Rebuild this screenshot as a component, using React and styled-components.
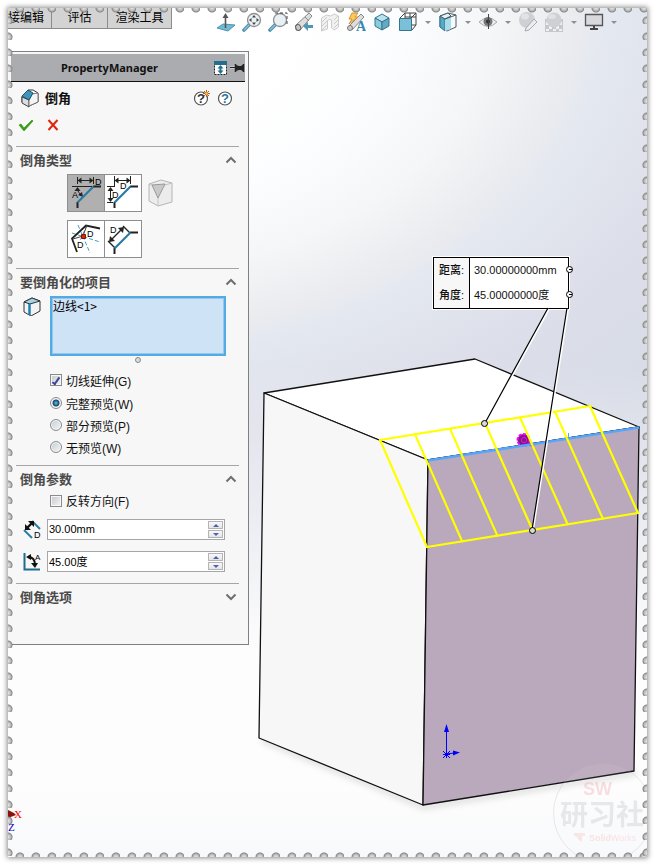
import { useState } from "react";
import styled, { createGlobalStyle, css } from "styled-components";

const chamferTypes = [
  [
    { id: "angle-distance", label: "角度距离", Icon: AngleDistanceIcon },
    { id: "distance-distance", label: "距离距离", Icon: DistanceDistanceIcon },
  ],
  [
    { id: "offset-face", label: "等距面", Icon: OffsetFaceIcon },
    { id: "face-face", label: "面-面", Icon: FaceFaceIcon },
  ],
];

const previews = [
  { id: "full", label: "完整预览(W)" },
  { id: "partial", label: "部分预览(P)" },
  { id: "none", label: "无预览(W)" },
];

const headsUpTools = [
  { label: "正视于", Icon: NormalToIcon },
  { label: "整屏显示全图", Icon: ZoomFitIcon },
  { label: "局部放大", Icon: ZoomAreaIcon },
  { label: "上一视图", Icon: PreviousViewIcon },
  { label: "剖面视图", Icon: SectionIcon },
  { label: "动态注解视图", Icon: AnnotationIcon },
  { label: "视图定向", Icon: CubeIcon },
  { label: "显示样式", Icon: WireCubeIcon, menu: true },
  { label: "隐藏线", Icon: StyleIcon, menu: true },
  { label: "隐藏/显示项目", Icon: EyeIcon, menu: true },
  { label: "编辑外观", Icon: AppearanceIcon },
  { label: "应用布景", Icon: SceneIcon, menu: true },
  { label: "视图设定", Icon: MonitorIcon, menu: true },
];

function App() {
  return (
    <>
      <GlobalStyle />
      <Sheet>
        <Header>
          <Tabs>
            <Tab>接编辑</Tab>
            <Tab $width={56}>评估</Tab>
            <Tab $width={64}>渲染工具</Tab>
          </Tabs>
          <HeadsUpBar>
            {headsUpTools.map(({ label, Icon, menu }) => (
              <ToolGroup key={label}>
                <ToolButton aria-label={label}>
                  <Icon />
                </ToolButton>
                {menu && (
                  <CaretButton aria-label={`${label} 菜单`}>
                    <svg width="6" height="4" viewBox="0 0 6 4">
                      <path d="M0 0h6L3 3z" fill="#8d8f94" />
                    </svg>
                  </CaretButton>
                )}
              </ToolGroup>
            ))}
          </HeadsUpBar>
        </Header>
        <Body>
          <Side>
            <PropertyManager />
            <Triad />
          </Side>
          <Viewport>
            <Callout>
              <tbody>
                <tr>
                  <th scope="row">距离:</th>
                  <td>30.00000000mm</td>
                </tr>
                <tr>
                  <th scope="row">角度:</th>
                  <td>45.00000000度</td>
                </tr>
              </tbody>
            </Callout>
            <Model />
          </Viewport>
        </Body>
        <Perforation $side="top" />
        <Perforation $side="bottom" />
        <Perforation $side="left" />
        <Perforation $side="right" />
      </Sheet>
    </>
  );
}

export default App;

function PropertyManager() {
  const [type, setType] = useState("angle-distance");
  const [tangent, setTangent] = useState(true);
  const [preview, setPreview] = useState("full");
  const [reverse, setReverse] = useState(false);
  const [distance, setDistance] = useState("30.00mm");
  const [angle, setAngle] = useState("45.00度");

  return (
    <Panel>
      <TitleBar>
        <Title>PropertyManager</Title>
        <TitleIcons />
      </TitleBar>
      <FeatureHeader>
        <FeatureRow>
          <ChamferIcon />
          <FeatureName>倒角</FeatureName>
          <IconButton aria-label="新增功能">
            <WhatsNewIcon />
          </IconButton>
          <IconButton aria-label="帮助">
            <HelpIcon />
          </IconButton>
        </FeatureRow>
        <ConfirmRow>
          <IconButton aria-label="确定">
            <svg width="16" height="14" viewBox="0 0 16 14">
              <path d="M1 7l2-1 3 4L14 2l1 1L6 13z" fill="#34a010" stroke="#2b8d0c" strokeWidth="0.6" />
            </svg>
          </IconButton>
          <IconButton aria-label="取消">
            <svg width="12" height="12" viewBox="0 0 12 12">
              <path d="M1.5 1l9 10M10.5 1l-9 10" stroke="#e0240a" strokeWidth="2" />
            </svg>
          </IconButton>
        </ConfirmRow>
      </FeatureHeader>

      <Section title="倒角类型" height={122}>
        <TypeGrid>
          {chamferTypes.map((row, i) => (
            <TypeRow key={i}>
              {row.map(({ id, label, Icon }) => (
                <TypeButton
                  key={id}
                  aria-label={label}
                  aria-pressed={type === id}
                  $active={type === id}
                  onClick={() => setType(id)}
                >
                  <Icon />
                </TypeButton>
              ))}
              {i === 0 && (
                <DisabledType aria-label="顶点" disabled>
                  <VertexIcon />
                </DisabledType>
              )}
            </TypeRow>
          ))}
        </TypeGrid>
      </Section>

      <Section title="要倒角化的项目" height={197}>
        <SelectionRow>
          <EdgeIcon />
          <SelectionBox aria-label="边线、面和环" defaultValue="边线<1>" />
        </SelectionRow>
        <Grip />
        <Options>
          <Option $height={24}>
            <Checkbox checked={tangent} onChange={() => setTangent(!tangent)} />
            切线延伸(G)
          </Option>
          {previews.map((p) => (
            <Option key={p.id} $height={22}>
              <Radio
                name="preview"
                checked={preview === p.id}
                onChange={() => setPreview(p.id)}
              />
              {p.label}
            </Option>
          ))}
        </Options>
      </Section>

      <Section title="倒角参数" height={118}>
        <Params>
          <Option $height={15} $indent>
            <Checkbox checked={reverse} onChange={() => setReverse(!reverse)} />
            反转方向(F)
          </Option>
          <Spinner label="距离" value={distance} onChange={setDistance} icon={<DistanceIcon />} />
          <Spinner label="角度" value={angle} onChange={setAngle} icon={<AngleIcon />} />
        </Params>
      </Section>

      <Section title="倒角选项" height={61} collapsed />
    </Panel>
  );
}

function Section({ title, height, collapsed, children }) {
  return (
    <SectionBox $height={height}>
      <SectionHead aria-expanded={!collapsed}>
        {title}
        <svg width="12" height="8" viewBox="0 0 12 8">
          <path
            d={collapsed ? "M1.5 1.5L6 6l4.5-4.5" : "M1.5 6.5L6 2l4.5 4.5"}
            fill="none"
            stroke="#6f6f6f"
            strokeWidth="2"
          />
        </svg>
      </SectionHead>
      {children}
    </SectionBox>
  );
}

function Spinner({ label, value, onChange, icon }) {
  const step = (delta) => {
    const unit = value.replace(/^[-\d.]+/, "");
    onChange((parseFloat(value) + delta).toFixed(2) + unit);
  };
  return (
    <SpinnerRow>
      {icon}
      <SpinnerField>
        <input aria-label={label} value={value} onChange={(e) => onChange(e.target.value)} />
        <SpinnerButtons>
          <button aria-label={`${label} 增加`} onClick={() => step(1)}>
            <svg width="6" height="3" viewBox="0 0 6 3">
              <path d="M0 3h6L3 0z" fill="#4c62ad" />
            </svg>
          </button>
          <button aria-label={`${label} 减少`} onClick={() => step(-1)}>
            <svg width="6" height="3" viewBox="0 0 6 3">
              <path d="M0 0h6L3 3z" fill="#4c62ad" />
            </svg>
          </button>
        </SpinnerButtons>
      </SpinnerField>
    </SpinnerRow>
  );
}

/* ---------- graphics area ---------- */

function Model() {
  const ribs = [0, 1, 2, 3, 4, 5, 6].map((i) => ({
    x1: 380 + i * 35,
    y1: 440 - (i * 34) / 6,
    x2: 427 + (i * 211) / 6,
    y2: 547 - (i * 34) / 6,
  }));
  return (
    <ModelSvg viewBox="249 51 398 806" width="398" height="806">
      <defs>
        <filter id="soft" x="-20%" y="-20%" width="140%" height="140%">
          <feGaussianBlur stdDeviation="3" />
        </filter>
      </defs>
      <path d="M262 740L424 807L636 773" fill="none" stroke="#888" strokeWidth="4" opacity="0.35" filter="url(#soft)" />
      <g stroke="#111" strokeWidth="1.3" strokeLinejoin="round">
        <path d="M264 393L475 359L639 427L428 460z" fill="#fff" />
        <path d="M264 393L428 460L423 805L259 738z" fill="#f7f7f7" />
        <path d="M428 460L639 427L634 771L423 805z" fill="#baa9bc" />
      </g>
      <circle cx="523.5" cy="440" r="6" fill="#7d1a85" stroke="#f0f" strokeWidth="2" strokeDasharray="3 1.5" />
      <circle cx="524" cy="440" r="2.6" fill="none" stroke="#f0f" />
      <path d="M527 443l7 3" stroke="#a010a8" strokeWidth="2.500" />
      <path d="M428 460.5L639 427.5" stroke="#55a5fb" strokeWidth="2.6" />
      <path d="M568.5 433v9" stroke="#55a5fb" />
      <g stroke="#ff0" strokeWidth="2.2" strokeLinecap="round">
        <path d="M380 440L590 406M427 547L638 513" />
        {ribs.map((r) => (
          <line key={r.x1} {...r} />
        ))}
      </g>
      <path d="M549 309L486 423M568 309L533 530" stroke="#fff" strokeWidth="2" />
      <path d="M548 308L485 423M567 308L532 530" stroke="#000" strokeWidth="1.2" />
      <g fill="#d8d8d8" stroke="#000">
        <circle cx="484.5" cy="423.5" r="3" />
        <circle cx="532.5" cy="530.5" r="3" />
      </g>
      <g stroke="#00f" fill="#00f">
        <path d="M446.5 754V730M446 754l8-1M443 751l7 7M450 751l-7 7M443 754.5h7M446.5 750v8" />
        <path d="M446.5 724l2.500 8h-5zM460 752.5l-7-2v5z" stroke="none" />
      </g>
      <g opacity="0.45">
        <circle cx="603" cy="813" r="49.5" fill="#fff" fillOpacity="0.15" stroke="#b9a9b4" strokeOpacity="0.6" />
        <Mark x="583" y="795" $size={18} fill="#f3b9bf">SW</Mark>
        <Mark x="560" y="825" $size={28} $serif fill="#cfd1d6">研习社</Mark>
        <path d="M574 833h11v3h-3v6l-3-2-3-4h-2z" fill="#f7cfcf" />
        <Mark x="589" y="841" $size={9} fill="#f7c6c6">
          Solid<tspan fontWeight="400">Works</tspan>
        </Mark>
      </g>
      <g fill="#fff" stroke="#000">
        <circle cx="569.5" cy="269.5" r="3" />
        <circle cx="569.5" cy="294.5" r="3" />
        <path d="M569 269.5h3M569 294.5h3" />
      </g>
    </ModelSvg>
  );
}

function Triad() {
  return (
    <TriadSvg width="20" height="28" viewBox="0 0 20 28">
      <path d="M0 2l6 3 2 2-8 3z" fill="#8c1111" />
      <text x="6" y="10" fill="#f00">X</text>
      <text x="0" y="23" fill="#00c">Z</text>
    </TriadSvg>
  );
}

/* ---------- toolbar icons ---------- */

function NormalToIcon() {
  return (
    <svg width="20" height="22" viewBox="0 0 20 22">
      <path d="M1 16l6-4 12 1-7 6z" fill="#74b9d2" stroke="#4b96b6" />
      <path d="M9.5 16V5" stroke="#555" strokeWidth="1.600" />
      <path d="M9.5 1l3 5h-6z" fill="#555" />
    </svg>
  );
}

function Lens({ children }) {
  return (
    <svg width="20" height="22" viewBox="0 0 20 22">
      <path d="M7 13l-5 5" stroke="#4d8eac" strokeWidth="3.600" strokeLinecap="round" />
      <path d="M7 13l-5 5" stroke="#8cc3da" strokeWidth="1.500" />
      <circle cx="12" cy="8" r="6.5" fill="#e9f0f3" stroke="#8b8f92" strokeWidth="1.300" />
      {children}
    </svg>
  );
}

function ZoomFitIcon() {
  return (
    <Lens>
      <path d="M12 3l2 2.500h-4zM12 13l2-2.500h-4zM7 8L9.500 6v4zM17 8L14.500 6v4z" fill="#444" />
    </Lens>
  );
}

function ZoomAreaIcon() {
  return (
    <Lens>
      <path d="M7 1h12v12" fill="none" stroke="#444" strokeDasharray="3 2" />
    </Lens>
  );
}

function PreviousViewIcon() {
  return (
    <svg width="20" height="22" viewBox="0 0 20 22">
      <path d="M2 13L15 1l3 3L6 18l-4 0z" fill="#ddd" stroke="#888" />
      <ellipse cx="4" cy="15.5" rx="2.5" ry="3" fill="#c8c8c8" stroke="#666" transform="rotate(-25 4 15)" />
      <path d="M11 5l4 4" stroke="#888" />
      <path d="M9 14l5-4v3h5v3h-5v3z" fill="#4f97b7" />
    </svg>
  );
}

function SectionIcon() {
  return (
    <svg width="20" height="22" viewBox="0 0 20 22">
      <path d="M1.5 6l5-3 4 1 4-2 4 2v11l-4 3-3-2V8q-3-2-4 1v8l-6 2z" fill="#f1f1f1" stroke="#ccc" />
      <path d="M2 10l5-5M2 14l6-6M2 18l5-5M14 8l4-4M14 12l4-4M14 16l4-4" stroke="#ccc" />
    </svg>
  );
}

function AnnotationIcon() {
  return (
    <svg width="20" height="22" viewBox="0 0 20 22">
      <path d="M2 15L15 2l3 3L6 18z" fill="#ddd" stroke="#888" />
      <circle cx="4" cy="16" r="2.5" fill="#ccc" stroke="#777" />
      <path d="M6 1h6L9 5h3l-9 7 3-5H3z" fill="#f9cb5e" stroke="#df8e27" />
      <IconLetter x="10" y="19" $size={14} $serif fill="#3c86ac">A</IconLetter>
    </svg>
  );
}

function CubeIcon() {
  return (
    <svg width="20" height="22" viewBox="0 0 20 22" stroke="#35748f" strokeLinejoin="round">
      <path d="M10 2l7 4-7 4-7-4z" fill="#b9e2ef" />
      <path d="M3 6l7 4v8l-7-4z" fill="#8ccade" />
      <path d="M17 6l-7 4v8l7-4z" fill="#64aac6" />
    </svg>
  );
}

function WireCubeIcon() {
  return (
    <svg width="20" height="22" viewBox="0 0 20 22">
      <path d="M2 6l5-5h11v12l-4 5M7 1v12h11M13 6l5-5M12 1v6M7 5h11" fill="none" stroke="#444" />
      <path d="M1.500 6.5h12v12h-12z" fill="#7cc0d8" stroke="#35748f" />
    </svg>
  );
}

function StyleIcon() {
  return (
    <svg width="20" height="22" viewBox="0 0 20 22" strokeLinejoin="round">
      <path d="M2 4l8-3 8 2v12l-9 4-7-4z" fill="#f6fafb" stroke="#4a5a63" />
      <path d="M2 4l5 3v12l-5-4z" fill="#58a9c8" stroke="#35748f" />
      <path d="M7 7l6-2v12l-6 2z" fill="#a8dcec" />
      <path d="M2 4l8-3 3 3-6 3z" fill="#dff2f7" stroke="#4a5a63" />
      <path d="M7 7l11-4" stroke="#4a5a63" />
    </svg>
  );
}

function EyeIcon() {
  return (
    <svg width="20" height="22" viewBox="0 0 20 22">
      <path d="M1 10q9-8 18 0q-9 9-18 0z" fill="#eee" stroke="#aaa" />
      <circle cx="10" cy="9.5" r="4.5" fill="#777" />
      <circle cx="10" cy="9.5" r="2" fill="#333" />
      <path d="M10.5 2v15" stroke="#444" />
    </svg>
  );
}

function AppearanceIcon() {
  return (
    <svg width="20" height="22" viewBox="0 0 20 22">
      <circle cx="9" cy="8" r="8" fill="#cfd0d3" />
      <ellipse cx="7" cy="4.5" rx="4" ry="3" fill="#e2e3e6" />
      <path d="M8 16l8-9 3 3-8 8-4 1z" fill="#ececee" stroke="#a9aaae" />
    </svg>
  );
}

function SceneIcon() {
  return (
    <svg width="20" height="22" viewBox="0 0 20 22">
      <path d="M1 7h18v13H1z" fill="#c6c7ca" />
      <path d="M2 10h3v3H2zM15 10h3v3h-3zM5 14h3v3H5zM12 14h3v3h-3zM2 17h3v2H2zM9 17h3v2H9zM15 17h3v2h-3z" fill="#f0f1f4" />
      <circle cx="10" cy="8" r="7.5" fill="#cfd0d3" />
      <ellipse cx="8" cy="4.5" rx="4" ry="2.5" fill="#e0e1e4" />
    </svg>
  );
}

function MonitorIcon() {
  return (
    <svg width="20" height="22" viewBox="0 0 20 22">
      <path d="M1.500 2.500h17v11h-17z" fill="#d9d9dd" stroke="#555" strokeWidth="1.300" />
      <path d="M9 14h2v2h3v2H6v-2h3z" fill="#444" />
    </svg>
  );
}

/* ---------- panel icons ---------- */

function TitleIcons() {
  return (
    <svg width="33" height="16" viewBox="0 0 33 16">
      <path d="M2.5 3.500h12v11h-12z" fill="#fff" stroke="#222" strokeDasharray="2 1" />
      <path d="M2 1h13v4H2z" fill="#246e8e" />
      <path d="M8.500 5l3 3.500H9.500v2h2l-3 3.500-3-3.500h2v-2h-2z" fill="#246e8e" />
      <path d="M18 7.500h6" stroke="#fff" strokeWidth="3" />
      <path d="M18 7.500h14M23.500 4v8M31.500 4v8" stroke="#222" strokeWidth="1.500" />
      <path d="M24 5l3 1h2l3-2v8l-3-2h-2l-3 1z" fill="#222" />
    </svg>
  );
}

function ChamferIcon() {
  return (
    <svg width="18" height="20" viewBox="0 0 18 20" strokeLinejoin="round">
      <path d="M1 8l6-6h5l5 3v9l-9 4-7-4z" fill="#fff" stroke="#333" />
      <path d="M1 9l7 3v7l-7-4z" fill="#ddd" stroke="#444" />
      <path d="M8 12l3-6 6-1v9l-9 4z" fill="#f4f4f4" stroke="#777" />
      <path d="M1 8l6-6 5 3-4 7z" fill="#3f94ba" stroke="#1c5470" />
    </svg>
  );
}

function HelpIcon({ dark, children }) {
  return (
    <svg width="18" height="16" viewBox="0 0 18 16">
      <circle cx="9" cy="8.5" r="6.500" fill="#fff" stroke="#555" strokeWidth="1.200" />
      <IconLetter x="5" y="13" $size={13} $bold fill={dark ? "#333" : "#1f78a6"}>?</IconLetter>
      {children}
    </svg>
  );
}

function WhatsNewIcon() {
  return (
    <HelpIcon dark>
      <path d="M14.500 0v7M11 3.500h7M12 1l5 5M17 1l-5 5" stroke="#b85f13" />
      <circle cx="14.500" cy="3.500" r="1.300" fill="#ffc95b" />
    </HelpIcon>
  );
}

/* the bevelled corner shared by the chamfer type buttons */
function Bevel() {
  return (
    <>
      <path d="M10.500 34v-6M26 12.500h8" stroke="#222" strokeWidth="2" />
      <path d="M10.500 28.500L26.500 12.500" stroke="#2a78a3" strokeWidth="2.200" />
    </>
  );
}

function AngleDistanceIcon() {
  return (
    <svg width="36" height="36" viewBox="1 1 36 36">
      <path d="M10.500 3v7M26.500 3v7M5 12.500h20M12 6.500h13" stroke="#222" />
      <path d="M10.500 6.500l4-3v6zM26.500 6.500l-4-3v6zM10.500 13l3 4h-6zM16 23l-5-2 4-3z" fill="#222" />
      <path d="M10.500 16q1 3 3 4" fill="none" stroke="#222" />
      <Bevel />
      <IconLetter x="28" y="11" $size={9}>D</IconLetter>
      <IconLetter x="5" y="24" $size={9}>A</IconLetter>
    </svg>
  );
}

function DistanceDistanceIcon() {
  return (
    <svg width="36" height="36" viewBox="1 1 36 36">
      <path d="M10.500 2v10M26.500 2v8M12 6.500h13M6.500 14v13M3 12.500h8M3 28.500h6" stroke="#222" />
      <path d="M10.500 6.500l4-3v6zM26.500 6.500l-4-3v6zM6.500 13l3 4h-6zM6.500 28l3-4h-6z" fill="#222" />
      <Bevel />
      <IconLetter x="16" y="15" $size={9}>D</IconLetter>
      <IconLetter x="8" y="24" $size={9}>D</IconLetter>
    </svg>
  );
}

function OffsetFaceIcon() {
  return (
    <svg width="36" height="36" viewBox="0 0 36 36">
      <path d="M10 4l12 28M4 12l28 9M19 4l-7 16" fill="none" stroke="#489cbf" strokeDasharray="4 2" />
      <path d="M9 31L4 17.500 18 4.500l14 3" fill="none" stroke="#222" strokeWidth="1.800" />
      <path d="M15 15l4-11M15 15L5 18" stroke="#444" />
      <path d="M13.500 13.500h4v4h-4z" fill="#e12008" stroke="#7d1408" />
      <IconLetter x="19" y="16" $size={9}>D</IconLetter>
      <IconLetter x="9" y="27" $size={9}>D</IconLetter>
    </svg>
  );
}

function FaceFaceIcon() {
  return (
    <svg width="36" height="36" viewBox="1 1 36 36">
      <path d="M6 21L19 8M4 21l7 7M19 6l7 7" stroke="#222" strokeWidth="1.400" />
      <path d="M5 22l1-6 5 5zM20 7l-6 1 5 5z" fill="#222" />
      <Bevel />
      <IconLetter x="6" y="13" $size={9}>D</IconLetter>
    </svg>
  );
}

function VertexIcon() {
  return (
    <svg width="26" height="30" viewBox="0 0 26 30" strokeLinejoin="round">
      <path d="M1 6l12-4 11 3v19l-14 4-9-5z" fill="#ececec" stroke="#b5b5b5" />
      <path d="M1 6l9 3 14-4M10 9v19" fill="none" stroke="#c4c4c4" />
      <path d="M4 7l13-1-7 14z" fill="#c9c9c9" stroke="#999" />
    </svg>
  );
}

function EdgeIcon() {
  return (
    <svg width="18" height="20" viewBox="0 0 18 20" strokeLinejoin="round">
      <path d="M1 6l8-4 8 3v10l-9 5-7-4z" fill="#f3f3f3" stroke="#333" />
      <path d="M1 6l8-4 8 3-10 3z" fill="#9ed3e8" stroke="#333" />
      <path d="M6.500 8v11" stroke="#1f7fae" strokeWidth="2.500" />
    </svg>
  );
}

function DistanceIcon() {
  return (
    <svg width="18" height="20" viewBox="0 0 18 20">
      <path d="M1 10l8 8M9 1l8 8" stroke="#2a7fa3" strokeWidth="2" />
      <path d="M4 8l5-5" stroke="#111" strokeWidth="2.400" />
      <path d="M2 10V4l6 6zM11 1v6L5 1z" fill="#111" />
      <IconLetter x="11" y="18" $size={9}>D</IconLetter>
    </svg>
  );
}

function AngleIcon() {
  return (
    <svg width="18" height="20" viewBox="0 0 18 20">
      <path d="M1.500 1v16.500H17" fill="none" stroke="#1f6c8f" strokeWidth="2" />
      <path d="M5 5q7 0 7 8" fill="none" stroke="#111" strokeWidth="2" />
      <path d="M3 5l5-3v6zM12 16l-4-5h7z" fill="#111" />
      <IconLetter x="12" y="8" $size={8}>A</IconLetter>
    </svg>
  );
}

/* ---------- styles ---------- */

const sans = `"Noto Sans CJK SC", sans-serif`;
const latin = `"Liberation Sans", "Noto Sans CJK SC", sans-serif`;

const GlobalStyle = createGlobalStyle`
  *, *::before, *::after {
    box-sizing: border-box;
  }
  body {
    margin: 0;
    background: #fff;
    font-family: ${latin};
    font-size: 12px;
    color: #111;
  }
  button {
    font: inherit;
    padding: 0;
    border: 0;
    background: none;
  }
  svg {
    display: block;
    flex: none;
  }
`;

const Sheet = styled.main`
  position: relative;
  display: flex;
  flex-direction: column;
  margin: 8px 7px 7px 8px;
  min-height: calc(100vh - 15px);
  overflow: hidden;
  box-shadow: 0 0 5px 1px rgba(0, 0, 0, 0.45);
  background:
    linear-gradient(
      to bottom,
      rgba(255, 255, 255, 0) 42%,
      #fdfdfe 76%,
      #fdfdfd 92%,
      #f8f9fb
    ),
    radial-gradient(
      ellipse 480px 330px at 90px 0,
      #fff 40%,
      #fcfdfe 62%,
      #f4f6f8 82%,
      #ebecef 98%,
      #e4e8f0 106%,
      #dcdfe9 132%,
      #d4d9e4 180%
    );
`;

const bite = (at) =>
  `radial-gradient(circle at ${at}, #dcdcdc 1px, #b4b4b4 3px, #858585 4px, transparent 5px)`;

const perforationSides = {
  top: css`
    inset: 0 0 auto 0;
    height: 5px;
    background: ${bite("12px 0")} 0 0 / 16px 5px;
  `,
  bottom: css`
    inset: auto 0 0 0;
    height: 5px;
    background: ${bite("12px 100%")} 0 0 / 16px 5px;
  `,
  left: css`
    inset: 0 auto 0 0;
    width: 5px;
    background: ${bite("0 13px")} 0 0 / 5px 16px;
  `,
  right: css`
    inset: 0 0 0 auto;
    width: 5px;
    background: ${bite("100% 13px")} 0 0 / 5px 16px;
  `,
};

const Perforation = styled.div`
  position: absolute;
  z-index: 2;
  pointer-events: none;
  ${(p) => perforationSides[p.$side]}
`;

const Header = styled.header`
  display: flex;
  height: 43px;
`;

const Tabs = styled.nav`
  display: flex;
  height: 21px;
`;

const Tab = styled.button`
  display: flex;
  justify-content: ${(p) => (p.$width ? "center" : "flex-end")};
  width: ${(p) => p.$width || 44}px;
  padding-right: ${(p) => (p.$width ? 0 : 7)}px;
  border-right: 1px solid #8c8c8c;
  border-bottom: 1px solid #8c8c8c;
  background: #d3d3d3;
  font-family: ${sans};
  font-size: 12px;
  line-height: 18px;
  white-space: nowrap;
`;

const HeadsUpBar = styled.div`
  display: flex;
  gap: 6px;
  height: 22px;
  margin: 4px 0 0 44px;
`;

const ToolGroup = styled.div`
  display: flex;
  align-items: center;
  gap: 6px;
`;

const ToolButton = styled.button`
  width: 20px;
  height: 22px;
`;

const CaretButton = styled.button`
  display: flex;
  justify-content: center;
  width: 8px;
`;

const Body = styled.div`
  display: flex;
  flex: 1;
`;

const Side = styled.div`
  display: flex;
  flex-direction: column;
  justify-content: space-between;
  width: 241px;
  flex: none;
`;

const Panel = styled.aside`
  border: 1px solid #808080;
  border-left: 0;
  background: #f7f7f7;
  padding: 2px 3px 0;
`;

const TitleBar = styled.div`
  display: flex;
  align-items: center;
  height: 28px;
  background: #abacb0;
  border-bottom: 1px solid #111;
`;

const Title = styled.h1`
  flex: 1;
  margin: 0;
  padding-left: 50px;
  font: bold 11px "Noto Sans", sans-serif;
`;

const FeatureHeader = styled.div`
  padding: 6px 11px 0 10px;
  height: 64px;
`;

const FeatureRow = styled.div`
  display: flex;
  align-items: center;
  gap: 6px;
  height: 20px;
`;

const FeatureName = styled.h2`
  flex: 1;
  margin: 0;
  font: bold 13px ${sans};
  line-height: 20px;
`;

const IconButton = styled.button`
  display: flex;
`;

const ConfirmRow = styled.div`
  display: flex;
  align-items: center;
  gap: 13px;
  height: 34px;
  margin-left: -3px;
`;

const SectionBox = styled.section`
  min-height: ${(p) => p.$height}px;
  margin: 0 6px 0 5px;
  border-top: 1px solid #a5a5a5;
`;

const SectionHead = styled.button`
  display: flex;
  align-items: center;
  justify-content: space-between;
  width: 100%;
  height: 25px;
  margin-bottom: 2px;
  padding: 0 2px 0 4px;
  font: bold 13px ${sans};
  line-height: 20px;
  color: #4a4a4a;
`;

const TypeGrid = styled.div`
  display: flex;
  flex-direction: column;
  gap: 8px;
  padding-left: 51px;
`;

const TypeRow = styled.div`
  display: flex;
  align-items: center;
`;

const TypeButton = styled.button`
  display: flex;
  align-items: center;
  justify-content: center;
  width: 38px;
  height: 38px;
  border: 1px solid #8e8e8e;
  background: ${(p) => (p.$active ? "#b0b0b0" : "#fff")};
  & + & {
    margin-left: -1px;
  }
`;

const DisabledType = styled.button`
  margin-left: 6px;
`;

const SelectionRow = styled.div`
  display: flex;
  gap: 9px;
  padding: 0 13px 0 7px;
`;

const SelectionBox = styled.textarea`
  flex: 1;
  min-width: 0;
  height: 60px;
  padding: 0 0 0 1px;
  border: 2px solid #52abe4;
  box-shadow: inset 0 0 0 1px #97c6ee;
  background: #cfe3f7;
  font: 12px ${sans};
  line-height: 16px;
  resize: none;
  outline: 0;
`;

const Grip = styled.div`
  width: 6px;
  height: 6px;
  margin: 1px auto 0 119px;
  border: 1px solid #888;
  border-radius: 50%;
  background: #ddd;
`;

const Options = styled.div`
  display: flex;
  flex-direction: column;
  padding: 5px 0 0 34px;
`;

const Option = styled.label`
  display: flex;
  align-items: center;
  gap: 4px;
  height: ${(p) => p.$height}px;
  margin-left: ${(p) => (p.$indent ? 34 : 0)}px;
`;

const Checkbox = styled.input.attrs({ type: "checkbox" })`
  appearance: none;
  display: grid;
  place-items: center;
  width: 12px;
  height: 12px;
  margin: 0;
  border: 1px solid #8b8b8b;
  box-shadow: inset 0 0 0 1px #f7f7f7;
  background: linear-gradient(135deg, #c4c7cc, #f6f6f6);
  &:checked::before {
    content: "";
    width: 4px;
    height: 9px;
    border: solid #39449c;
    border-width: 0 2px 2px 0;
    transform: rotate(35deg);
  }
`;

const Radio = styled.input.attrs({ type: "radio" })`
  appearance: none;
  width: 12px;
  height: 12px;
  margin: 0;
  border: 1px solid #8b8b8b;
  border-radius: 50%;
  box-shadow: inset 0 0 0 1px #f7f7f7;
  background: linear-gradient(135deg, #c2cdd4, #f6f6f6);
  &:checked {
    background: radial-gradient(circle at 5px 5px, #5cc2e8, #17466c 3px, #e8eef2 4px);
  }
`;

const Params = styled.div`
  display: flex;
  flex-direction: column;
  gap: 11px;
`;

const SpinnerRow = styled.div`
  display: flex;
  align-items: center;
  gap: 6px;
  padding: 0 14px 0 7px;
`;

const SpinnerField = styled.div`
  display: flex;
  flex: 1;
  height: 21px;
  border: 1px solid #a5a7ab;
  background: #fff;
  padding: 1px;
  input {
    flex: 1;
    min-width: 0;
    padding: 0 0 1px;
    border: 0;
    outline: 0;
    background: none;
    font: 11px ${latin};
  }
`;

const SpinnerButtons = styled.div`
  display: flex;
  flex-direction: column;
  gap: 1px;
  width: 15px;
  button {
    display: grid;
    place-items: center;
    flex: 1;
    border: 1px solid #b4b4b4;
    background: linear-gradient(#f8f8f8, #e4e4e4);
  }
`;

const Viewport = styled.div`
  position: relative;
  flex: 1;
  min-width: 0;
`;

/* sits above the callout so its handles and leaders stay visible */
const ModelSvg = styled.svg`
  position: relative;
  z-index: 1;
  pointer-events: none;
`;

const Callout = styled.table`
  position: absolute;
  top: 206px;
  left: 184px;
  border: 1px solid #000;
  outline: 1px solid #fff;
  border-collapse: collapse;
  background: #fff;
  font-family: ${latin};
  font-size: 11px;
  line-height: 25px;
  th {
    width: 36px;
    padding: 0;
    border-right: 1px solid #000;
    background: #f7f7f7;
    font-weight: 500;
    text-align: center;
  }
  td {
    width: 99px;
    padding: 0 0 0 4px;
    white-space: nowrap;
  }
`;

const TriadSvg = styled.svg`
  margin-bottom: 21px;
  font: 11px "Liberation Serif", serif;
`;

const Mark = styled.text`
  font-family: ${(p) => (p.$serif ? `"Liberation Serif", ${sans}` : `"Liberation Sans", sans-serif`)};
  font-size: ${(p) => p.$size}px;
  font-weight: bold;
`;

const IconLetter = styled.text`
  font-family: ${(p) => (p.$serif ? `"Liberation Serif", serif` : `"Liberation Sans", sans-serif`)};
  font-size: ${(p) => p.$size}px;
  font-weight: ${(p) => (p.$bold || p.$serif ? "bold" : "normal")};
`;
